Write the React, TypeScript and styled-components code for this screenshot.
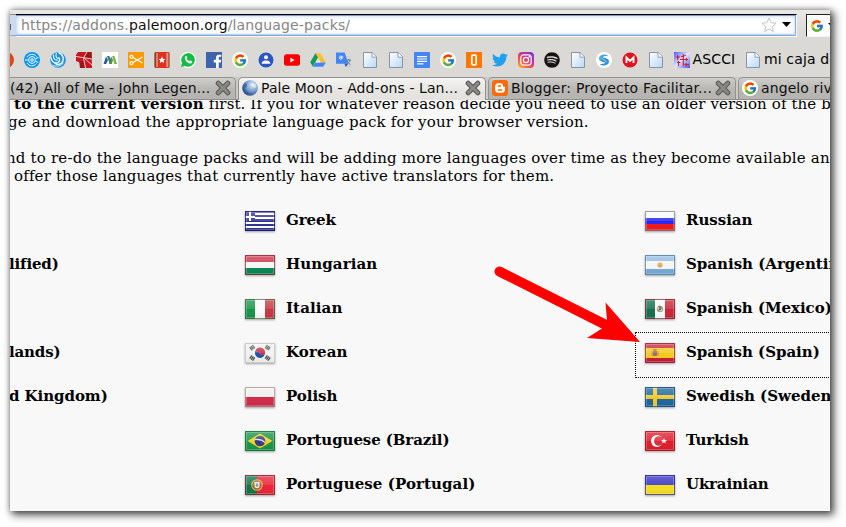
import React from 'react';
import styled, { createGlobalStyle, css } from 'styled-components';
import { FcGoogle } from 'react-icons/fc';
import { FaWhatsapp, FaFacebookF, FaTwitter, FaSpotify } from 'react-icons/fa';

const Global = createGlobalStyle`
  * { box-sizing: border-box; }
  body { margin: 0; background: #fff; overflow: hidden; }
`;

const Page = styled.div`
  width: 846px;
  height: 527px;
  padding: 10px 16px 16px 10px;
  background: #fff;
`;

const Window = styled.div`
  position: relative;
  width: 820px;
  height: 501px;
  overflow: hidden;
  display: flex;
  flex-direction: column;
  background: #f8f8f8;
`;

const Shadow = styled.div`
  width: 820px;
  height: 501px;
  box-shadow: 3px 3px 8px 1px rgba(0, 0, 0, 0.68), 0 0 5px rgba(0, 0, 0, 0.32);
`;

const chromeFont = css`
  font-family: 'DejaVu Sans', sans-serif;
  font-size: 14px;
  white-space: pre;
`;

const AddressBar = styled.div`
  flex: none;
  display: flex;
  height: 28px;
  padding-top: 4px;
  background: linear-gradient(#e9e8e5, #dddcd8 70%, #dbdad6);
`;

const Identity = styled.div`
  display: flex;
  align-items: center;
  width: 6px;
  height: 22px;
  border-top: 1px solid #8c8b88;
  border-bottom: 1px solid #8fa9c9;
  background: #ccd9ef;
`;

const IdentityGlyph = styled.div`
  width: 1px;
  height: 6px;
  margin-top: 4px;
  background: #4a61a8;
`;

const UrlField = styled.div`
  ${chromeFont}
  display: flex;
  align-items: center;
  width: 781px;
  height: 23px;
  padding: 0 5px 2px 5px;
  border-top: 1px solid #000;
  border-right: 1px solid #f6f6f4;
  border-bottom: 1px solid #f8f8f6;
  background: #fff;
  box-shadow: inset 0 1px 0 #7d9ac0, inset 0 -1px 0 #86aad6, inset 0 -2px 0 #b8d0ec,
    inset -1px 0 0 #86a9d5, inset 0 0 5px #9abce5;
  color: #858585;
  letter-spacing: 0.145px;
`;

const Domain = styled.span`
  color: #111;
`;

const FieldTools = styled.div`
  display: flex;
  align-items: center;
  gap: 5px;
  margin-left: auto;
`;

const SearchField = styled.div`
  display: flex;
  flex: 1;
  align-items: center;
  gap: 4px;
  height: 23px;
  margin-left: 9px;
  padding-left: 3px;
  overflow: hidden;
  border-top: 1px solid #222;
  border-left: 1px solid #222;
  border-bottom: 1px solid #f4f4f2;
  background: #fff;
  svg { flex: none; }
`;

const Bookmarks = styled.div`
  ${chromeFont}
  flex: none;
  display: flex;
  align-items: center;
  gap: 10px;
  height: 39px;
  padding-top: 5px;
  background: #dad9d5;
  overflow: hidden;
  letter-spacing: 0.15px;
`;

const Bookmark = styled.div<{ $pull?: number }>`
  display: flex;
  flex: none;
  align-items: center;
  gap: 2.5px;
  height: 20px;
  margin-left: ${p => p.$pull ?? 0}px;
  line-height: 18px;
  svg { flex: none; display: block; }
`;

const BookmarkLabel = styled.span`
  margin-top: -2px;
`;

const Tabs = styled.div`
  flex: none;
  display: flex;
  gap: 2px;
  height: 23px;
  background: #cbcac6;
  border-bottom: 1px solid #8e8d89;
`;

const Tab = styled.div<{ $active?: boolean; $first?: boolean }>`
  ${chromeFont}
  flex: none;
  display: flex;
  align-items: center;
  width: ${p => (p.$first ? 226 : 248)}px;
  height: ${p => (p.$active ? 23 : 22)}px;
  padding: 0 4px ${p => (p.$active ? 3 : 2)}px ${p => (p.$first ? 0 : 3)}px;
  border: 1px solid #92918d;
  border-bottom: 0;
  border-left-width: ${p => (p.$first ? 0 : 1)}px;
  border-radius: ${p => (p.$first ? '0 5px 0 0' : '5px 5px 0 0')};
  background: ${p =>
    p.$active ? 'linear-gradient(#f4f4f2, #e6e5e1 60%, #e3e2de)' : 'linear-gradient(#cfcecb, #b9b8b5 50%, #b5b4b1)'};
  color: #101010;
  svg { flex: none; display: block; }
`;

const TabLabel = styled.span<{ $ls: number; $flush?: boolean }>`
  margin-left: ${p => (p.$flush ? 0 : 3)}px;
  letter-spacing: ${p => p.$ls}px;
`;

const CloseSlot = styled.span`
  margin-left: auto;
`;

const Content = styled.div`
  flex: 1;
  overflow: hidden;
  background: #f8f8f8;
  font-family: 'DejaVu Serif', serif;
  font-size: 15px;
  color: #000;
  white-space: pre;
`;

const Paragraph = styled.div`
  height: 36px;
  margin: -5px 0 23px;
  line-height: 18px;
  & + & { margin: -5px 0 0; }
`;

const Line = styled.div<{ $start: number; $ls: number }>`
  padding-left: ${p => Math.max(p.$start, 0)}px;
  margin-left: ${p => Math.min(p.$start, 0)}px;
  letter-spacing: ${p => p.$ls}px;
`;

const Strong = styled.b`
  letter-spacing: 0.25px;
`;

const Columns = styled.div`
  display: grid;
  grid-template-columns: 226px 400px 400px;
  margin-top: 16px;
`;

const Column = styled.div`
  display: flex;
  flex-direction: column;
`;

const Entry = styled.div<{ $focus?: boolean; $indent: number }>`
  display: flex;
  align-items: flex-start;
  gap: 11px;
  height: 44px;
  padding: 10px 0 0 ${p => p.$indent}px;
  outline: ${p => (p.$focus ? '1px dotted #000' : 'none')};
  svg { flex: none; filter: drop-shadow(0 1px 1px rgba(0, 0, 0, 0.35)); }
`;

const EntryName = styled.span<{ $ls: number }>`
  font-weight: 700;
  line-height: 19px;
  letter-spacing: ${p => p.$ls}px;
`;

const Caption = styled(EntryName)<{ $shift: number }>`
  margin-left: ${p => p.$shift}px;
`;

const ArrowLayer = styled.svg`
  position: absolute;
  left: 480px;
  top: 250px;
`;

const Svg16 = ({ children }: { children: React.ReactNode }) => (
  <svg width="16" height="16" viewBox="0 0 16 16">{children}</svg>
);

const PageIcon = () => (
  <Svg16>
    <defs>
      <linearGradient id="sheet" x1="0" y1="0" x2="1" y2="1">
        <stop offset="0" stopColor="#fff" /><stop offset="1" stopColor="#b9d8f5" />
      </linearGradient>
    </defs>
    <path d="M1.5.5h8.700l4.300 4.300v10.700h-13z" fill="url(#sheet)" stroke="#8794a8" />
    <path d="M10 .5v4.700h4.500" fill="#fff" stroke="#8794a8" strokeWidth=".9" />
  </Svg16>
);

const GoogleIcon = () => (
  <Svg16>
    <circle cx="8" cy="8" r="8" fill="#fff" />
    <FcGoogle x="1.3" y="1.3" width="13.4" height="13.4" />
  </Svg16>
);

const icons: React.ReactNode[] = [
  <Svg16><circle cx="8" cy="8" r="8" fill="#dd4814" /></Svg16>,
  <Svg16>
    <circle cx="8" cy="8" r="8" fill="#0a93f5" />
    <g fill="none" stroke="#fff" strokeWidth="1">
      <path d="M3 5.400A5.600 5.600 0 0 1 12.500 4.600M3 10.700a5.600 5.600 0 0 0 9.600.7" />
      <circle cx="8" cy="8" r="3.400" /><circle cx="8" cy="8" r="1.300" />
      <path d="M1 8h3M12 6.400l2.500-.8M11.700 9.500l2.500.7" />
    </g>
  </Svg16>,
  <Svg16>
    <circle cx="8" cy="8" r="7.800" fill="#1c8fdc" />
    <g fill="none" stroke="#e9f8ff" strokeLinecap="round">
      <path d="M9 .8C13 2.500 14.500 7 12 10.500c-2 2.500-5.500 2.500-7 .5" strokeWidth="1.500" />
      <path d="M1 5.500C1.500 10 5 12 8 10.300c2-1.200 2-3.300.8-4.500" strokeWidth="1.400" />
      <path d="M3.500 3c-.3 3.500 1.500 5.500 4 5M6.300 1.500C5.500 4 6.300 6 8 6.500" strokeWidth="1.100" />
      <path d="M3 13.500c4 1.500 8.500.3 10.500-2.500" strokeWidth=".9" />
    </g>
  </Svg16>,
  <Svg16>
    <path d="M2 0h13.500l.5 16H4L3.500 10.500 0 9V3z" fill="#c9151c" />
    <path d="M3.500 9.500h5L9 16H4zM10 0h5.500l.3 7-6.300-1z" fill="#961619" />
    <path d="M0 4.500 16 7M11 0 7.500 6l2 10M8 6l8 7" stroke="#f7dcdc" strokeWidth=".9" fill="none" />
  </Svg16>,
  <Svg16>
    <rect width="16" height="16" fill="#fff" />
    <path d="M1.500 12 4 4.500l2 3.500-1.800 4z" fill="#2b5c8e" />
    <path d="M5 4h2.300l2 5-1.500 3z" fill="#3c6f97" />
    <path d="M7 12 9 4.500l2 3.500-1.200 4z" fill="#4b8f4b" />
    <path d="M10.200 4h2.200l2.600 8h-2.700z" fill="#7bb53b" />
  </Svg16>,
  <Svg16>
    <rect width="16" height="16" fill="#f90" />
    <g fill="none" stroke="#fff" strokeWidth="1.200">
      <circle cx="3.500" cy="4.800" r="1.500" /><circle cx="3.500" cy="11.200" r="1.500" />
      <path d="M4.900 5.600 14.500 11M4.900 10.400 14.500 5" />
    </g>
  </Svg16>,
  <Svg16>
    <rect x=".5" width="15" height="16" rx="2" fill="#e0301e" />
    <rect x=".5" width="2.500" height="16" rx="1" fill="#8f4b31" />
    <rect x="13" width="2.500" height="16" rx="1" fill="#b56043" />
    <path d="M3 1v14M13 1v14" stroke="#fff" strokeWidth=".7" />
    <path d="m8 4.500 1 2.300 2.500.2-1.900 1.600.6 2.400L8 9.700 5.800 11l.6-2.400L4.500 7l2.500-.2z" fill="#fff" />
  </Svg16>,
  <Svg16>
    <circle cx="8" cy="8" r="8" fill="#fff" />
    <path d="M1 15l1-4A6.800 6.800 0 1 1 5 14z" fill="#13bf43" />
    <path d="M5.300 4.300c.8-.7 1.300-.4 1.600.4l.4 1c.2.500-.7 1-.5 1.400.6 1 1.400 1.700 2.400 2.100.4.200.8-.9 1.300-.7l1.400.7c.8.500 0 1.900-.9 2.200C8.300 12.200 3.300 7.600 5.300 4.300z" fill="#fff" />
  </Svg16>,
  <Svg16><rect width="16" height="16" fill="#3f64ae" /><FaFacebookF x="4.500" y="2.500" width="11" height="13.500" color="#fff" /></Svg16>,
  <GoogleIcon />,
  <Svg16>
    <circle cx="8" cy="8" r="7.500" fill="#2a56c6" />
    <circle cx="8" cy="5.300" r="2" fill="#fff" />
    <path d="M3.700 11.800V11C4.500 8.800 6 8.500 8 8.500s3.500.3 4.300 2.500v.8z" fill="#fff" />
  </Svg16>,
  <Svg16><rect y="2.300" width="16" height="11.500" rx="2.500" fill="#f00" /><path d="m6.400 5.700 4.200 2.400-4.200 2.400z" fill="#fff" /></Svg16>,
  <Svg16>
    <path d="M5.400 1.200h5l5.400 9.200h-5z" fill="#fbc02d" />
    <path d="M5.400 1.200 8 5.600 2.800 14.500.2 10.300z" fill="#129b57" />
    <path d="M5.400 10.400h10.400l-2.600 4.300H2.800z" fill="#4285f4" />
    <path d="M5.500 10.400 8 5.800l2.700 4.600z" fill="#e9e8e4" />
  </Svg16>,
  <Svg16>
    <path d="M6 4h9.300v11.500H9.500z" fill="#d0d2d8" />
    <path d="M0 .5h8.700l3.500 11.200H0z" fill="#4285f4" />
    <path d="M8.500 11.700h3.700L9.700 15z" fill="#3059bf" />
    <path d="M7.300 5H5v1h1.200c-.2.900-.8 1.300-1.600 1.200-1.600-.2-1.700-2.900 0-3.200.5 0 .9.200 1.200.5" fill="none" stroke="#fff" />
    <path d="M10.500 8h4.300M12.600 7v1M14 8c-.4 2-2 3.500-3 4M11.300 9c.5 1.500 1.800 2.800 3 3.300" stroke="#657283" strokeWidth=".9" fill="none" />
  </Svg16>,
  <PageIcon />,
  <PageIcon />,
  <Svg16><rect width="16" height="16" rx="1" fill="#4385f5" /><path d="M3 4.600h10M3 7h10M3 9.400h10M3 11.800h6.500" stroke="#fff" strokeWidth="1.200" /></Svg16>,
  <GoogleIcon />,
  <Svg16><rect width="16" height="16" fill="#f70" /><rect x="5.800" y="3.200" width="4.400" height="9.600" rx="1.200" fill="none" stroke="#fff" strokeWidth="1.700" /></Svg16>,
  <FaTwitter size={16} color="#20a0ef" />,
  <Svg16>
    <defs>
      <linearGradient id="insta" x1="0" y1="1" x2=".8" y2="0">
        <stop offset="0" stopColor="#ffc33f" /><stop offset=".35" stopColor="#fa5a3d" />
        <stop offset=".65" stopColor="#d82b8e" /><stop offset="1" stopColor="#7a3bd0" />
      </linearGradient>
    </defs>
    <rect width="16" height="16" rx="4" fill="url(#insta)" />
    <rect x="2.800" y="2.800" width="10.400" height="10.400" rx="3" fill="none" stroke="#fff" strokeWidth="1.200" />
    <circle cx="8" cy="8" r="2.600" fill="none" stroke="#fff" strokeWidth="1.300" /><circle cx="11.200" cy="4.900" r=".8" fill="#fff" />
  </Svg16>,
  <FaSpotify size={16} color="#171313" />,
  <PageIcon />,
  <Svg16>
    <circle cx="8" cy="8" r="8" fill="#fff" />
    <path d="M12.300 3.800C9 1.300 3.500 2.400 3 6.300c-.1 2.200 1.700 3.300 3.800 3.700l3 .7c1.500-1.700.7-3.700-1.600-4.200C6 6 6.500 4.500 8.500 4.300z" fill="#4ba4e0" />
    <path d="M3.700 12.200c3.300 2.500 8.800 1.400 9.300-2.500.1-2.200-1.700-3.300-3.800-3.700l-3-.7c-1.500 1.700-.7 3.700 1.600 4.200 2.200.5 1.700 2-.3 2.200z" fill="#308fd5" />
    <path d="M5.500 5.500c.5 2.500 4.500 2 5 5" stroke="#eaf5fc" strokeWidth=".6" fill="none" />
  </Svg16>,
  <Svg16><circle cx="8" cy="8" r="7.500" fill="#e3131e" /><path d="M4.500 11V5.500L8 9l3.500-3.500V11" fill="none" stroke="#fff" strokeWidth="1.900" /></Svg16>,
  <PageIcon />,
];

const AscciIcon = () => (
  <Svg16>
    <defs>
      <linearGradient id="asc" x1="0" y1="0" x2="1" y2="1">
        <stop stopColor="#4f5cff" /><stop offset=".5" stopColor="#e3e6ff" /><stop offset="1" stopColor="#4552e6" />
      </linearGradient>
    </defs>
    <rect width="16" height="16" fill="url(#asc)" />
    <path d="M1.500 5h4.500M3.700 3v5M7 4.500l5-1M9.300 2v12M6 7.500h8M12.500 6v3M3 10.500h3.500M4.500 9v5M12 11v3.500M10.500 12.500H15" fill="none" stroke="#cc2438" strokeWidth="1.200" />
  </Svg16>
);

const BloggerIcon = () => (
  <Svg16>
    <rect width="16" height="16" rx="3" fill="#f96a0a" />
    <path d="M6.200 3.200h2.300a2.500 2.500 0 0 1 2.500 2.500c0 .8.300 1 1 1 .8 0 1 .3 1 1v2.100a3 3 0 0 1-3 3H6.200a3 3 0 0 1-3-3V6.200a3 3 0 0 1 3-3z" fill="#fff" />
    <path d="M6.300 6h2.200M6.300 10h3.500" stroke="#f96a0a" strokeWidth="1.300" strokeLinecap="round" />
  </Svg16>
);

const MoonIcon = () => (
  <Svg16>
    <defs>
      <radialGradient id="moon" cx=".65" cy=".3" r=".75">
        <stop stopColor="#e3eefa" /><stop offset=".5" stopColor="#7fa3d2" /><stop offset="1" stopColor="#1e4588" />
      </radialGradient>
    </defs>
    <circle cx="8" cy="8" r="7.800" fill="url(#moon)" />
    <path d="M3 3c1 1 3 1 2 3S2 8 3 10s4 2 4 4C3 14 0 10 1 6z" fill="#2b528f" opacity=".55" />
    <path d="M10 3c2 1 4 0 4 3s-2 2-3 1-2-2-1-4z" fill="#fff" opacity=".45" />
  </Svg16>
);

const CloseIcon = () => (
  <Svg16>
    <path d="M3.200 3.200 12.800 12.800M12.800 3.200 3.200 12.800" stroke="#565654" strokeWidth="5" strokeLinecap="round" />
    <path d="M3.200 3.200 12.800 12.800M12.800 3.200 3.200 12.800" stroke="#898986" strokeWidth="3" strokeLinecap="round" />
  </Svg16>
);

const bands = (colors: string[], heights?: number[]) => {
  let y = 0;
  return colors.map((c, i) => {
    const h = heights ? heights[i] : 20 / colors.length;
    const r = <rect key={i} y={y} width="30" height={h} fill={c} />;
    y += h;
    return r;
  });
};
const pales = (colors: string[]) => colors.map((c, i) => <rect key={i} x={i * 10} width="10" height="20" fill={c} />);

const flagArt: Record<string, React.ReactNode> = {
  Greek: <>
    {bands(['#2f2f91', '#fff', '#2f2f91', '#fff', '#2f2f91', '#fff', '#2f2f91', '#fff', '#2f2f91'], [2, 2, 2, 2, 3, 2, 2, 2, 3])}
    <rect width="10" height="11" fill="#2f2f91" /><path d="M5 0v10M0 6h10" stroke="#fff" strokeWidth="2" />
  </>,
  Hungarian: bands(['#cc3347', '#f6f6f6', '#078653'], [7, 6, 7]),
  Italian: pales(['#159447', '#fafafa', '#c43843']),
  Korean: <>
    <rect width="30" height="20" fill="#f1f1f1" />
    <path d="M10.300 8a5 5 0 0 1 9.600 3c-1.500 2-3.900 1-4.900-.8-1-1.600-3.300-1.500-4.700-2.200z" fill="#ce2c43" />
    <path d="M10.300 8C9 12 12 15 15 15c2 0 4.200-1.500 4.900-4-1.500 2-3.900 1-4.900-.8-1-1.600-3.300-1.500-4.700-2.200z" fill="#274f9e" />
    <g stroke="#505050" strokeWidth="4" strokeDasharray="1.300 .4">
      <path d="m5.300 6 4-2.700M20.700 13.700l4 2.700M5.300 13.700l4 2.700M20.700 3.300l4 2.700" />
    </g>
  </>,
  Polish: bands(['#eeeeec', '#cf2b49']),
  'Portuguese (Brazil)': <>
    <rect width="30" height="20" fill="#169447" /><path d="M15 2.500 27.500 10 15 17.500 2.500 10z" fill="#f4ce22" />
    <circle cx="15" cy="10" r="5.300" fill="#353a88" /><path d="M10 8.500c4-.7 7.500.5 10 3" stroke="#dce3e8" strokeWidth="1.200" fill="none" />
  </>,
  'Portuguese (Portugal)': <>
    <rect width="30" height="20" fill="#ea2338" /><rect width="12" height="20" fill="#11734c" />
    <circle cx="12" cy="10" r="5.200" fill="none" stroke="#d8b63c" strokeWidth="1.300" /><circle cx="12" cy="10" r="4" fill="#bd633f" />
    <path d="M9.500 7h5v4c0 3-5 3-5 0z" fill="#eee" /><path d="M12 8v4M10.500 10h3" stroke="#5581b0" />
  </>,
  Russian: bands(['#f9f9f9', '#2828ef', '#f01818'], [7, 6, 7]),
  'Spanish (Argentina)': <>{bands(['#91bce2', '#f5f5f5', '#75a9d9'], [6, 8, 6])}<circle cx="15" cy="10" r="2.600" fill="#dfa553" stroke="#ecd09f" /></>,
  'Spanish (Mexico)': <>
    {pales(['#166d4d', '#fafafa', '#c92538'])}
    <circle cx="15" cy="10" r="2.700" fill="none" stroke="#9aa99a" strokeWidth="1.200" /><path d="M13 7c3-1 5 2 3 4l-3 1 1-3z" fill="#7c6350" />
  </>,
  'Spanish (Spain)': <>
    {bands(['#c6283a', '#f6c81e', '#c41e32'], [5, 10, 5])}
    <rect x="7.500" y="7.500" width="5" height="5.500" rx="1.500" fill="#b9664c" />
    <path d="M6.700 8v5M13.300 8v5" stroke="#c2a572" /><circle cx="10" cy="10.500" r="1.300" fill="#777598" /><path d="M8.500 6.800h3" stroke="#a94433" />
  </>,
  'Swedish (Sweden)': <><rect width="30" height="20" fill="#1c659d" /><path d="M10 0v20M0 10h30" stroke="#f2c928" strokeWidth="4" /></>,
  Turkish: <>
    <rect width="30" height="20" fill="#dd1c2b" /><circle cx="12" cy="10" r="6" fill="#fff" /><circle cx="13.800" cy="10" r="4.800" fill="#dd2c3a" />
    <path d="m19 7 .8 2 2.200.1-1.700 1.300.6 2.100-1.900-1.200-1.900 1.200.6-2.100L16 9.100l2.200-.1z" fill="#fff" />
  </>,
  Ukrainian: bands(['#3531c1', '#f4dd20']),
};

const edges: Record<string, string> = {
  Greek: '#14146c', Korean: '#bdbdbd', Polish: '#aa8d8d', Russian: '#77778c', Italian: '#4b684e',
  Hungarian: '#8d2432', 'Spanish (Argentina)': '#4d799e', Ukrainian: '#28248f', 'Swedish (Sweden)': '#164d77',
  'Portuguese (Brazil)': '#0c7134', 'Spanish (Spain)': '#98212c', Turkish: '#aa111e',
};

const Flag = ({ name }: { name: string }) => (
  <svg width="30" height="20" viewBox="0 0 30 20">
    <defs>
      <linearGradient id="gloss" x1="0" y1="0" x2="0" y2="1">
        <stop offset="0" stopColor="#fff" stopOpacity=".26" /><stop offset=".5" stopColor="#fff" stopOpacity=".12" />
        <stop offset=".51" stopColor="#fff" stopOpacity="0" /><stop offset="1" stopColor="#000" stopOpacity=".07" />
      </linearGradient>
    </defs>
    {flagArt[name]}
    <rect width="30" height="20" fill="url(#gloss)" />
    <rect x="1.500" y="1.500" width="27" height="17" fill="none" stroke="#fff" strokeOpacity=".22" />
    <rect x=".5" y=".5" width="29" height="19" fill="none" stroke={edges[name] ?? '#7b2b35'} strokeOpacity=".72" />
  </svg>
);

type Lang = [string, number];
const middle: Lang[] = [
  ['Greek', -0.1], ['Hungarian', 0.1], ['Italian', 0.1], ['Korean', 0.12], ['Polish', -0.05],
  ['Portuguese (Brazil)', -0.09], ['Portuguese (Portugal)', 0.09],
];
const right: Lang[] = [
  ['Russian', -0.02], ['Spanish (Argentina)', 0], ['Spanish (Mexico)', -0.04], ['Spanish (Spain)', -0.02],
  ['Swedish (Sweden)', 0], ['Turkish', -0.2], ['Ukrainian', -0.18],
];
const left: [string, number, number][] = [
  ['', 0, 0], ['lified)', -0.15, -1], ['', 0, 0], ['lands)', -0.15, -1], ['d Kingdom)', -0.06, -1],
];

const LangColumn = ({ items }: { items: Lang[] }) => (
  <Column>
    {items.map(([name, ls]) => (
      <Entry key={name} $indent={9} $focus={name === 'Spanish (Spain)'}>
        <Flag name={name} /><EntryName $ls={ls}>{name}</EntryName>
      </Entry>
    ))}
  </Column>
);

const DropArrow = () => (
  <svg width="9" height="5" viewBox="0 0 9 5"><path d="M0 0h9L4.500 5z" fill="#000" /></svg>
);

export default function App() {
  return (
    <Page>
      <Global />
      <Shadow>
        <Window>
          <AddressBar>
            <Identity><IdentityGlyph /></Identity>
            <UrlField>
              <span>https://addons.<Domain>palemoon.org</Domain>/language-packs/</span>
              <FieldTools>
                <svg width="16" height="16" viewBox="0 0 16 16"><path d="m8 1 2.100 4.700 5 .5-3.800 3.400 1.100 5L8 12l-4.400 2.600 1.100-5L.9 6.200l5-.5z" fill="#fff" stroke="#c3c6ca" /></svg>
                <DropArrow />
              </FieldTools>
            </UrlField>
            <SearchField>
              <FcGoogle size={14} />
              <DropArrow />
            </SearchField>
          </AddressBar>
          <Bookmarks>
            {icons.map((icon, i) => <Bookmark key={i} $pull={i === 0 ? -12 : 0}>{icon}</Bookmark>)}
            <Bookmark><AscciIcon /><BookmarkLabel>ASCCI</BookmarkLabel></Bookmark>
            <Bookmark><PageIcon /><BookmarkLabel>mi caja de</BookmarkLabel></Bookmark>
          </Bookmarks>
          <Tabs>
            <Tab $first><TabLabel $flush $ls={0.06}>(42) All of Me - John Legen...</TabLabel><CloseSlot><CloseIcon /></CloseSlot></Tab>
            <Tab $active><MoonIcon /><TabLabel $ls={0.07}>Pale Moon - Add-ons - Lan...</TabLabel><CloseSlot><CloseIcon /></CloseSlot></Tab>
            <Tab><BloggerIcon /><TabLabel $ls={0.2}>Blogger: Proyecto Facilitar...</TabLabel><CloseSlot><CloseIcon /></CloseSlot></Tab>
            <Tab><GoogleIcon /><TabLabel $ls={0.1}>angelo rivera</TabLabel></Tab>
          </Tabs>
          <Content>
            <Paragraph>
              <Line $start={4} $ls={0.11}><Strong>to the current version</Strong> first. If you for whatever reason decide you need to use an older version of the b</Line>
              <Line $start={-2} $ls={0.19}>ge and download the appropriate language pack for your browser version.</Line>
            </Paragraph>
            <Paragraph>
              <Line $start={-4} $ls={0.19}>nd to re-do the language packs and will be adding more languages over time as they become available an</Line>
              <Line $start={4} $ls={0.16}>offer those languages that currently have active translators for them.</Line>
            </Paragraph>
            <Columns>
              <Column>
                {left.map(([name, ls, shift], i) => (
                  <Entry key={i} $indent={0}><Caption $ls={ls} $shift={shift}>{name}</Caption></Entry>
                ))}
              </Column>
              <LangColumn items={middle} />
              <LangColumn items={right} />
            </Columns>
          </Content>
          <ArrowLayer width="170" height="110" viewBox="10 10 170 110">
            <path d="M19.500 21.500 128 76" stroke="#f00" strokeWidth="10" strokeLinecap="round" />
            <path d="M160 92 125.500 52.500 127 70 122 78.500 107 88z" fill="#f00" />
          </ArrowLayer>
        </Window>
      </Shadow>
    </Page>
  );
}
